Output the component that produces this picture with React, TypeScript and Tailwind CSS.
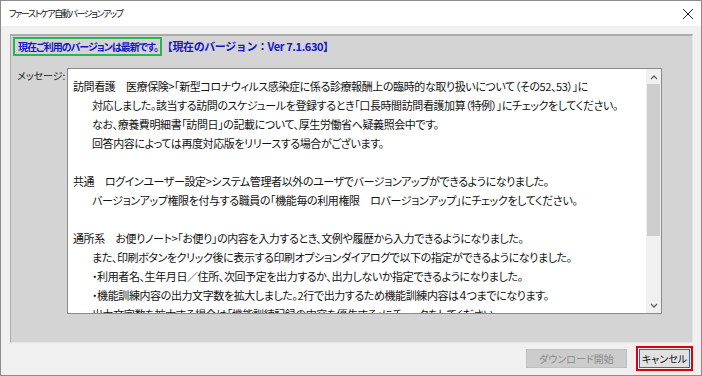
import React from "react";

const base = "font-['Noto_Sans_CJK_JP','Noto_Sans_CJK_SC',sans-serif]";
const palt = "[font-feature-settings:'palt']";

const lines: { t: string; indent?: boolean }[] = [
  { t: "訪問看護　医療保険>「新型コロナウィルス感染症に係る診療報酬上の臨時的な取り扱いについて（その52、53）」に" },
  { t: "対応しました。該当する訪問のスケジュールを登録するとき「口長時間訪問看護加算（特例）」にチェックをしてください。", indent: true },
  { t: "なお、療養費明細書「訪問日」の記載について、厚生労働省へ疑義照会中です。", indent: true },
  { t: "回答内容によっては再度対応版をリリースする場合がございます。", indent: true },
  { t: "" },
  { t: "共通　ログインユーザー設定>システム管理者以外のユーザでバージョンアップができるようになりました。" },
  { t: "バージョンアップ権限を付与する職員の「機能毎の利用権限　ロバージョンアップ」にチェックをしてください。", indent: true },
  { t: "" },
  { t: "通所系　お便りノート>「お便り」の内容を入力するとき、文例や履歴から入力できるようになりました。" },
  { t: "また、印刷ボタンをクリック後に表示する印刷オプションダイアログで以下の指定ができるようになりました。", indent: true },
  { t: "・利用者名、生年月日／住所、次回予定を出力するか、出力しないか指定できるようになりました。", indent: true },
  { t: "・機能訓練内容の出力文字数を拡大しました。2行で出力するため機能訓練内容は４つまでになります。", indent: true },
  { t: "出力文字数を拡大する場合は「機能訓練記録の内容を優先する」にチェックをしてください。", indent: true },
];

export default function App() {
  return (
    <div className={`w-[702px] h-[376px] border border-[#8c8c8c] bg-[#f0f0f0] flex flex-col overflow-hidden ${base}`}>
      {/* title bar */}
      <div className="h-[25px] bg-white flex items-center justify-between pl-[8px] pr-[6px] shrink-0">
        <span className={`text-[9px] tracking-[-1.4px] text-[#111] leading-none whitespace-nowrap ${palt}`}>ファーストケア自動バージョンアップ</span>
        <svg width="12" height="12" viewBox="0 0 12 12" className="mr-[1px]">
          <path d="M1 1 L11 11 M11 1 L1 11" stroke="#222" strokeWidth="1" />
        </svg>
      </div>
      {/* body */}
      <div className="flex-1 flex flex-col pl-[9px] pr-[8px] pt-[8px]">
        {/* panel */}
        <div className="h-[309px] bg-[#d4d4d4] border-t-2 border-l border-[#ababab] border-r border-b border-r-[#e6e6e6] border-b-[#e6e6e6] flex flex-col">
          <div className="flex items-center mt-[1px] ml-[2px] h-[19px]">
            <div className="h-[19px] border-2 border-[#2cb35a] flex items-center pl-[3px] pr-[2px]">
              <span className={`text-[10px] tracking-[-1px] font-bold text-[#1414c8] leading-none whitespace-nowrap ${palt}`}>現在ご利用のバージョンは最新です。</span>
            </div>
            <span className="text-[11px] tracking-[-0.4px] font-bold text-[#1414c8] leading-none whitespace-nowrap">【現在のバージョン：Ver 7.1.630】</span>
          </div>
          <div className="flex mt-[12px]">
            <div className={`w-[56px] pl-[6px] pt-[3px] text-[10px] text-[#222] leading-none whitespace-nowrap ${palt}`}>メッセージ:</div>
            <div className="w-[595px] h-[246px] bg-white border border-[#8a8a8a] flex overflow-hidden">
              <div className="flex-1 pt-[8px] pl-[5px] overflow-hidden">
                {lines.map((l, i) => (
                  <div
                    key={i}
                    className={`h-[19px] leading-[19px] text-[11px] tracking-[-0.4px] text-[#111] whitespace-nowrap ${palt} ${l.indent ? "pl-[19px]" : ""}`}
                  >
                    {l.t}
                  </div>
                ))}
              </div>
              {/* scrollbar */}
              <div className="w-[15px] bg-[#f0f0f0] flex flex-col items-center">
                <div className="h-[15px] flex items-center justify-center">
                  <svg width="8" height="6" viewBox="0 0 8 6">
                    <path d="M1 5 L4 2 L7 5" stroke="#606060" strokeWidth="1.3" fill="none" />
                  </svg>
                </div>
                <div className="w-[13px] h-[152px] bg-[#cdcdcd]" />
                <div className="flex-1" />
                <div className="h-[15px] flex items-center justify-center">
                  <svg width="8" height="6" viewBox="0 0 8 6">
                    <path d="M1 1 L4 4 L7 1" stroke="#606060" strokeWidth="1.3" fill="none" />
                  </svg>
                </div>
              </div>
            </div>
          </div>
        </div>
        {/* buttons */}
        <div className="flex justify-end items-center gap-[9px] mt-[3px]">
          <div className={`w-[101px] h-[19px] bg-[#cccccc] border border-[#bfbfbf] flex items-center justify-center text-[10px] text-[#8a8a8a] leading-none whitespace-nowrap ${palt}`}>
            ダウンロード開始
          </div>
          <div className="w-[57px] h-[25px] border-2 border-[#e00000] p-[1px] flex">
            <div className={`flex-1 border border-[#0078d7] bg-[#e1e1e1] flex items-center justify-center text-[10px] text-[#111] leading-none whitespace-nowrap ${palt}`}>
              キャンセル
            </div>
          </div>
        </div>
      </div>
    </div>
  );
}
